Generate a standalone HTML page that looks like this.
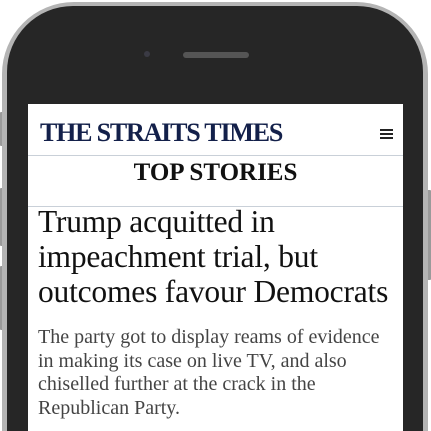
<!DOCTYPE html>
<html><head><style>
html,body{margin:0;padding:0;width:431px;height:431px;overflow:hidden;background:#fff;}
#w{position:relative;width:431px;height:431px;overflow:hidden;}
.btn{position:absolute;background:#9a9a9a;width:4px;border-radius:1px}
.frame{position:absolute;left:2px;top:2px;width:426px;height:429px;border-radius:72px 72px 0 0;background:#b4b4b4;}
.bezel{position:absolute;left:7px;top:6px;width:416px;height:425px;border-radius:66px 66px 0 0;background:#262626;}
.screen{position:absolute;left:28px;top:104px;width:375px;height:327px;background:#fff;}
.logo{position:absolute;left:12px;top:14px;font-family:"Liberation Serif",serif;font-weight:bold;font-size:26px;color:#13204a;letter-spacing:-1.2px;white-space:nowrap}
.ham{position:absolute;left:380px;top:129px;}
.ham i{display:block;width:13px;height:2px;background:#222;margin-bottom:2px}
.hr{position:absolute;left:0;width:375px;height:1px;background:#c9d0d8}
.ts{position:absolute;left:0;width:375px;top:55px;text-align:center;font-family:"Liberation Serif",serif;font-weight:bold;font-size:25px;color:#111;}
.h{position:absolute;left:10px;top:100px;font-family:"Liberation Serif",serif;font-size:31.5px;line-height:35px;color:#111;letter-spacing:-0.2px;white-space:nowrap}
.p{position:absolute;left:10px;top:222px;font-family:"Liberation Serif",serif;font-size:20px;line-height:23.5px;color:#444;white-space:nowrap}
</style></head><body><div id="w">
<div class="btn" style="left:0;top:112px;height:34px"></div>
<div class="btn" style="left:0;top:188px;height:58px"></div>
<div class="btn" style="left:0;top:266px;height:64px"></div>
<div class="btn" style="left:427px;top:190px;height:90px"></div>
<div class="frame"></div>
<div class="bezel"></div>
<div style="position:absolute;left:144px;top:51px;width:6px;height:6px;border-radius:50%;background:#3a3a44"></div>
<div style="position:absolute;left:183px;top:52px;width:66px;height:6px;border-radius:3px;background:#555"></div>
<div class="screen">
<div class="logo">THE STRAITS TIMES</div>
<div class="hr" style="top:51px"></div>
<div class="ts">TOP STORIES</div>
<div class="hr" style="top:102px"></div>
<div class="h">Trump acquitted in<br>impeachment trial, but<br>outcomes favour Democrats</div>
<div class="p">The party got to display reams of evidence<br>in making its case on live TV, and also<br>chiselled further at the crack in the<br>Republican Party.</div>
</div>
<div class="ham"><i></i><i></i><i></i></div>
</div></body></html>
